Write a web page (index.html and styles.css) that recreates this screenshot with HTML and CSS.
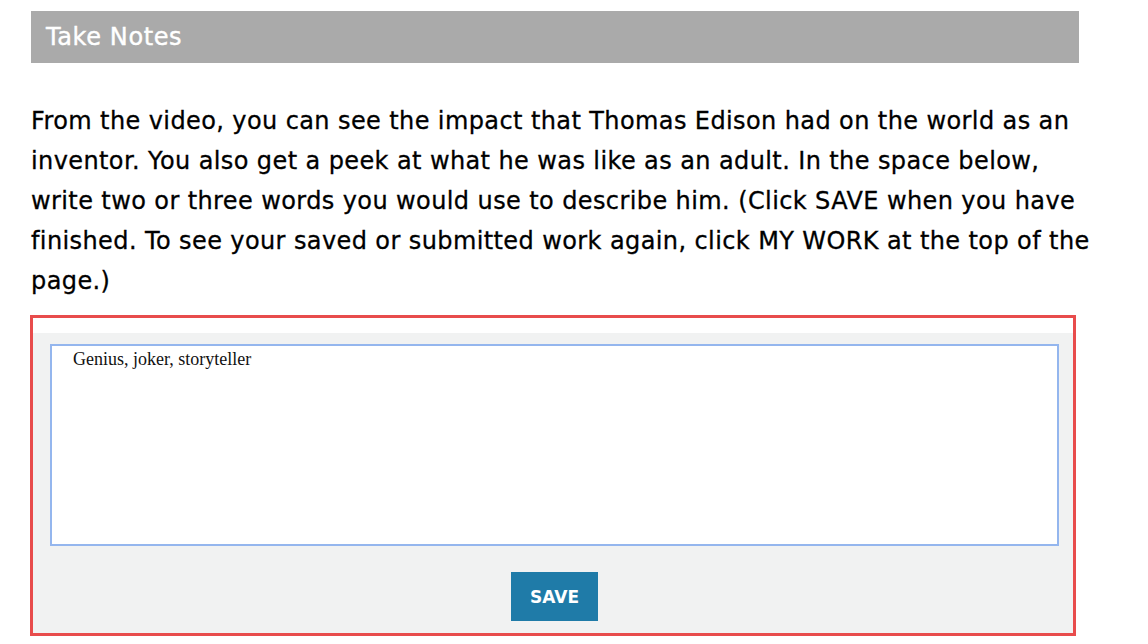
FILE: index.html
```html
<!DOCTYPE html>
<html lang="en">
<head>
<meta charset="utf-8">
<title>Take Notes</title>
<link rel="stylesheet" href="styles.css">
</head>
<body>
<div class="page">
  <div class="header"><h2 class="header-title">Take Notes</h2></div>
  <p class="prompt">From the video, you can see the impact that Thomas Edison had on the world as an<br>inventor. You also get a peek at what he was like as an adult. In the space below,<br>write two or three words you would use to describe him. (Click SAVE when you have<br>finished. To see your saved or submitted work again, click MY WORK at the top of the<br>page.)</p>
  <div class="answer-box">
    <div class="answer-inner">
      <textarea class="answer-text">Genius, joker, storyteller</textarea>
      <div class="actions"><button class="save-btn" type="button">SAVE</button></div>
    </div>
  </div>
</div>
</body>
</html>
```
FILE: styles.css
```css
html, body {
  margin: 0;
  padding: 0;
  background: #ffffff;
}
.page {
  width: 1048px;
  padding: 11px 0 0 31px;
  font-family: "DejaVu Sans", "Open Sans", sans-serif;
  color: #000000;
}
.header {
  background: #aaaaaa;
  height: 52px;
  display: flex;
  align-items: center;
  padding-left: 15px;
}
.header-title {
  margin: 0;
  font-size: 24px;
  font-weight: normal;
  color: #ffffff;
  letter-spacing: 0.6px;
  -webkit-text-stroke: 0.4px #ffffff;
}
.prompt {
  margin: 38px 0 14px 0;
  font-size: 24px;
  line-height: 40px;
  white-space: nowrap;
  letter-spacing: 0.4px;
  -webkit-text-stroke: 0.3px #000000;
}
.answer-box {
  width: 1040px;
  margin-left: -1px;
  border: 3px solid #e84c4c;
  padding-top: 15px;
}
.answer-inner {
  background: #f1f2f2;
  padding: 11px 14px 12px 17px;
}
.answer-text {
  display: block;
  box-sizing: border-box;
  width: 1009px;
  height: 202px;
  border: 2px solid #94b6ee;
  background: #ffffff;
  padding: 3px 21px 1px 21px;
  margin: 0;
  font-family: "Liberation Serif", serif;
  font-size: 18px;
  color: #111111;
  resize: none;
  outline: none;
}
.actions {
  width: 1009px;
  display: flex;
  justify-content: center;
  margin-top: 26px;
}
.save-btn {
  width: 87px;
  height: 49px;
  border: none;
  background: #1f7ba8;
  color: #ffffff;
  font-family: "DejaVu Sans", sans-serif;
  font-weight: bold;
  font-size: 17px;
  padding: 0;
  cursor: pointer;
}
```
